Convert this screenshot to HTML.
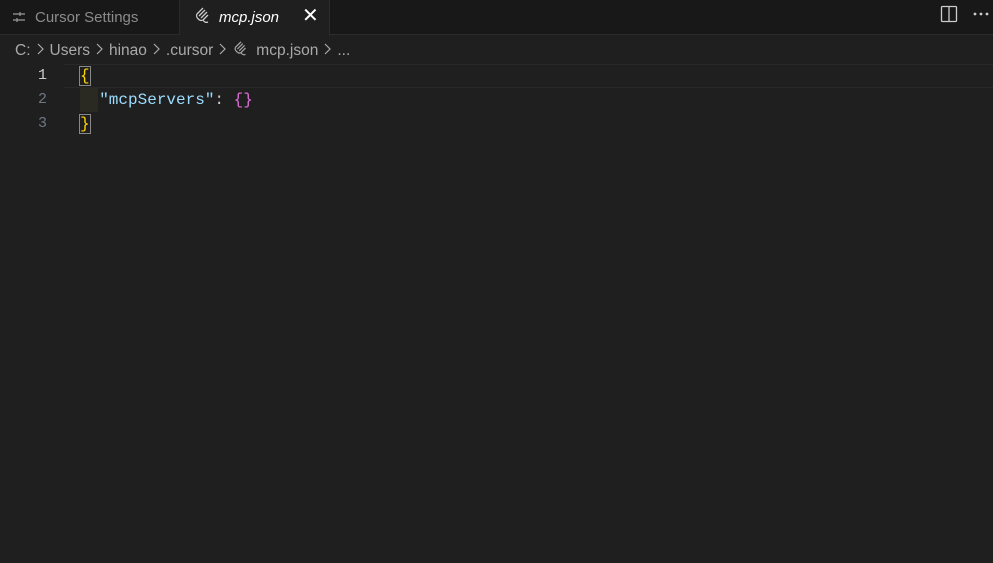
<!DOCTYPE html>
<html><head><style>
body{margin:0;width:993px;height:563px;background:#1f1f1f;overflow:hidden;font-family:"Liberation Sans",sans-serif;position:relative}
.tabs{position:absolute;left:0;top:0;width:993px;height:35px;background:#181818;border-bottom:1px solid #2b2b2b;box-sizing:border-box}
.tab{position:absolute;top:0;height:35px;font-size:15px;line-height:33px}
.t1{left:0;width:179px;color:#8b8b8b;border-right:1px solid #2b2b2b}
.t2{left:180px;width:149px;background:#1f1f1f;color:#fff;font-style:italic;height:36px;border-right:1px solid #2b2b2b}
.bc{position:absolute;top:40px;left:15px;font-size:15.5px;color:#a9a9a9;white-space:nowrap}
.ch{display:inline-block;width:16px;height:14px;vertical-align:-1px;margin:0 2px 0 1px}
.code{position:absolute;left:0;top:64px;font-family:"Liberation Mono",monospace;font-size:16px}
.ln{position:absolute;width:47px;text-align:right;color:#6e7681;height:24px;line-height:24px;font-size:15px}
.cl{position:absolute;left:80px;height:24px;line-height:24px;white-space:pre}
</style></head><body>
<div class="tabs">
<div class="tab t1"><svg style="position:absolute;left:12px;top:10px" width="14" height="14" viewBox="0 0 14 14" fill="none" stroke="#9a9a9a" stroke-width="1.2"><path d="M1 4h12M1 10h12"/><path d="M8 2v4M5 8v4"/></svg><span style="position:absolute;left:35px;top:1px">Cursor Settings</span></div>
<div class="tab t2"><svg style="position:absolute;left:14px;top:6px" width="18" height="20" viewBox="0 0 18 20" fill="none" stroke="#ccc" stroke-width="1.3"><path d="M3 8l6-6M5 10l6-6M7 12l6-6M9 14l5-5M3 8c-2 3 3 8 6 6M9 14c1 2 3 3 5 2"/></svg><span style="position:absolute;left:39px;top:1px">mcp.json</span><span style="position:absolute;left:122px;font-style:normal;font-size:20px">✕</span></div>
<svg style="position:absolute;left:940px;top:5px" width="18" height="18" viewBox="0 0 18 18" fill="none" stroke="#ccc" stroke-width="1.3"><rect x="1.5" y="1.5" width="15" height="15" rx="1"/><path d="M9 1.5v15"/></svg>
<svg style="position:absolute;left:973px;top:12px" width="16" height="4" viewBox="0 0 16 4" fill="#ccc"><circle cx="2" cy="2" r="1.4"/><circle cx="8" cy="2" r="1.4"/><circle cx="14" cy="2" r="1.4"/></svg>
</div>
<div class="bc">C:<svg class="ch" viewBox="0 0 16 14" fill="none" stroke="#aaa" stroke-width="1.2"><path d="M6 2l5 5-5 5"/></svg>Users<svg class="ch" viewBox="0 0 16 14" fill="none" stroke="#aaa" stroke-width="1.2"><path d="M6 2l5 5-5 5"/></svg>hinao<svg class="ch" viewBox="0 0 16 14" fill="none" stroke="#aaa" stroke-width="1.2"><path d="M6 2l5 5-5 5"/></svg>.cursor<svg class="ch" viewBox="0 0 16 14" fill="none" stroke="#aaa" stroke-width="1.2"><path d="M6 2l5 5-5 5"/></svg><svg width="18" height="18" viewBox="0 0 18 20" fill="none" stroke="#aaa" stroke-width="1.3" style="vertical-align:-3px;margin-right:6px"><path d="M3 8l6-6M5 10l6-6M7 12l6-6M9 14l5-5M3 8c-2 3 3 8 6 6M9 14c1 2 3 3 5 2"/></svg>mcp.json<svg class="ch" viewBox="0 0 16 14" fill="none" stroke="#aaa" stroke-width="1.2"><path d="M6 2l5 5-5 5"/></svg>...</div>
<div style="position:absolute;left:64px;top:64px;width:929px;height:22px;border-top:1px solid #282828;border-bottom:1px solid #282828"></div>
<div class="code">
<div class="ln" style="top:0;color:#ccc">1</div>
<div class="ln" style="top:24px">2</div>
<div class="ln" style="top:48px">3</div>
<div class="cl" style="top:0;"><span style="color:#ffd700;outline:1px solid #888">{</span></div>
<div style="position:absolute;left:80px;top:24px;width:18px;height:24px;background:#2a2a22"></div>
<div class="cl" style="top:24px">  <span style="color:#9cdcfe">"mcpServers"</span><span style="color:#ccc">: </span><span style="color:#da70d6">{}</span></div>
<div class="cl" style="top:48px"><span style="color:#ffd700;outline:1px solid #888">}</span></div>
</div>
</body></html>
